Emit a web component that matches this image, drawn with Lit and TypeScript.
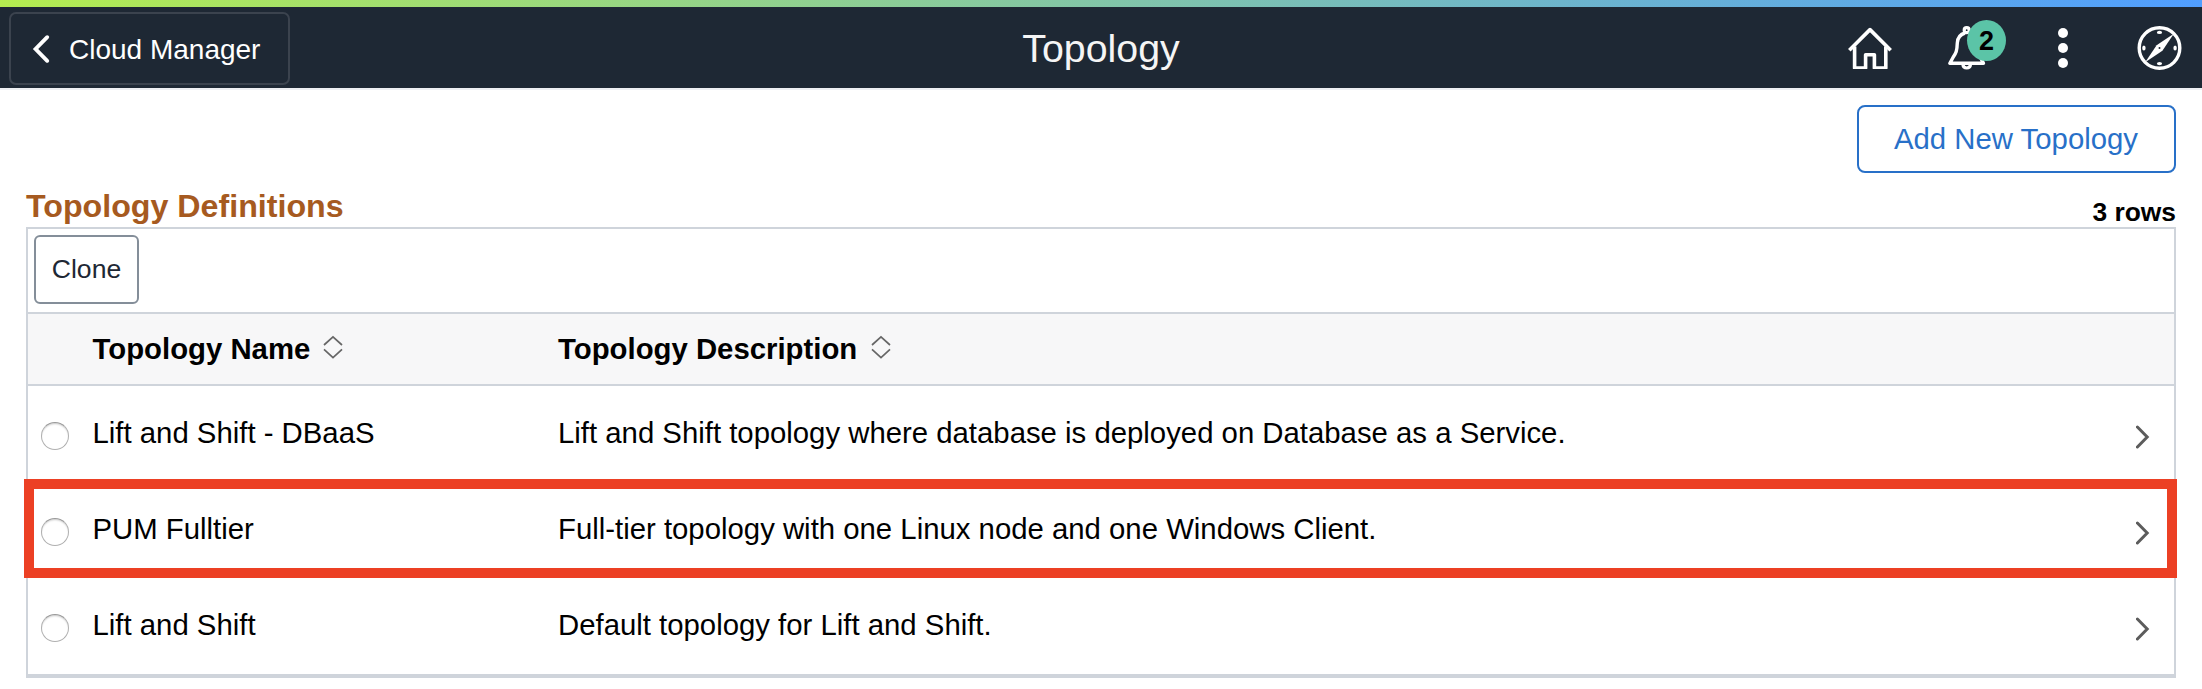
import { LitElement, html, css, svg } from "lit";
import { customElement } from "lit/decorators.js";

interface Topology {
  name: string;
  description: string;
  highlighted?: boolean;
}

const topologies: Topology[] = [
  {
    name: "Lift and Shift - DBaaS",
    description:
      "Lift and Shift topology where database is deployed on Database as a Service.",
  },
  {
    name: "PUM Fulltier",
    description: "Full-tier topology with one Linux node and one Windows Client.",
    highlighted: true,
  },
  { name: "Lift and Shift", description: "Default topology for Lift and Shift." },
];

@customElement("app-header")
class AppHeader extends LitElement {
  static styles = css`
    :host {
      display: block;
    }
    .stripe {
      height: 7px;
      background: linear-gradient(to right, #b4ed50, #509eff);
    }
    .bar {
      box-sizing: border-box;
      height: 83px;
      padding: 5px 20px 0 9px;
      background: #1e2834;
      border-bottom: 2px solid #eef0f3;
      display: grid;
      grid-template-columns: 1fr auto 1fr;
      align-items: start;
      color: #fff;
    }
    .back {
      box-sizing: border-box;
      width: 281px;
      height: 73px;
      border: 2px solid #3b434e;
      border-radius: 7px;
      background: none;
      color: inherit;
      font: inherit;
      font-size: 28px;
      padding: 3px 0 0 21px;
      display: flex;
      align-items: center;
      gap: 19px;
      white-space: nowrap;
    }
    .back svg {
      margin-top: -2px;
    }
    .title {
      margin: 0;
      font-size: 39.3px;
      font-weight: 400;
      line-height: 73px;
      color: #f5f5f5;
      padding-left: 11px;
    }
    .actions {
      justify-self: end;
      display: flex;
      height: 72px;
      align-items: center;
    }
    .home {
      margin-top: -2px;
    }
    .bell {
      position: relative;
      display: flex;
      margin: -2px 72px 0 56px;
    }
    .badge {
      position: absolute;
      left: 19px;
      top: -4px;
      width: 39px;
      height: 41px;
      border-radius: 50%;
      background: #5bc4a7;
      color: #000;
      font-size: 27px;
      font-weight: 700;
      line-height: 43px;
      text-align: center;
    }
    .compass {
      margin-left: 68px;
    }
    svg {
      display: block;
      flex: none;
    }
  `;

  render() {
    return html`
      <div class="stripe"></div>
      <header class="bar">
        <button class="back">
          <svg width="18" height="30" viewBox="0 0 18 30" fill="none" stroke="#fff" stroke-width="3.9" stroke-linecap="round" stroke-linejoin="miter">
            <path d="M15.2 3.2 3.6 15 15.2 26.8" />
          </svg>
          <span>Cloud Manager</span>
        </button>
        <h1 class="title">Topology</h1>
        <nav class="actions">
          <svg class="home" width="44" height="44" viewBox="0 0 44 44" fill="none" stroke="#fff" stroke-width="3.6" stroke-linejoin="round">
            <path d="M1.3 25.2 22 4.6 42.7 25.2" />
            <path d="M6.6 21.5V43H17.6V29.8H26.4V43H37.8V21.5" />
          </svg>
          <div class="bell">
            <svg width="38" height="46" viewBox="0 0 38 46" fill="none" stroke="#fff" stroke-width="3.4" stroke-linejoin="round">
              <circle cx="18.7" cy="6.2" r="2.5" stroke-width="3.2" />
              <path d="M17 9C11.5 10.5 9.6 14.5 9.3 19C9 27 8.2 29 5 33.5L1.9 39.3H35.5L32.4 33.5C29 28 28.4 26 28.1 19C27.8 14.5 25.9 10.5 20.4 9" />
              <path d="M14.8 40C15.3 45.3 22.1 45.3 22.6 40" stroke-width="3.2" />
            </svg>
            <span class="badge">2</span>
          </div>
          <svg width="10" height="42" viewBox="0 0 10 42" fill="#fff">
            ${[6, 21, 36].map((y) => svg`<circle cx="5" cy=${y} r="5" />`)}
          </svg>
          <svg class="compass" width="46" height="46" viewBox="0 0 46 46">
            <circle cx="23.5" cy="23" r="20.3" fill="none" stroke="#fff" stroke-width="3.4" />
            <g fill="#fff">
              <ellipse cx="23.5" cy="7.4" rx="2.6" ry="1.7" />
              <ellipse cx="23.5" cy="38.6" rx="2.6" ry="1.7" />
              <ellipse cx="7.9" cy="23" rx="1.7" ry="2.6" />
              <ellipse cx="39.1" cy="23" rx="1.7" ry="2.6" />
            </g>
            <path d="M37.8 8.8 26.4 25.8 9.2 37.2 20.6 20.2Z" fill="#fff" />
            <circle cx="23.5" cy="23" r="1" fill="#1e2834" />
          </svg>
        </nav>
      </header>
    `;
  }
}

@customElement("topology-grid")
class TopologyGrid extends LitElement {
  static styles = css`
    :host {
      display: block;
      border: 2px solid #cfd4db;
      border-bottom-width: 4px;
    }
    .toolbar {
      box-sizing: border-box;
      height: 85px;
      padding: 6px;
      border-bottom: 2px solid #cfd4db;
    }
    .clone {
      box-sizing: border-box;
      width: 105px;
      height: 69px;
      border: 2px solid #848e99;
      border-radius: 6px;
      background: #fff;
      color: #1e2834;
      font: inherit;
      font-size: 26.6px;
      padding: 0;
      display: block;
    }
    .line {
      box-sizing: border-box;
      display: grid;
      grid-template-columns: 64.5px 465.5px 1fr 48px;
      align-items: center;
      position: relative;
      color: #000;
      white-space: nowrap;
    }
    .head {
      height: 72px;
      background: #f7f7f8;
      border-bottom: 2px solid #cfd4db;
      font-weight: 700;
    }
    .row {
      height: 96px;
      border-bottom: 2px solid #cfd4db;
    }
    .row:last-child {
      border-bottom-color: transparent;
    }
    .sortable {
      display: flex;
      align-items: center;
      gap: 14px;
    }
    .sortable.name {
      gap: 13px;
    }
    .sort {
      margin-top: -4px;
    }
    .radio {
      box-sizing: border-box;
      width: 28px;
      height: 28px;
      margin: 6px 0 0 13px;
      border: 1px solid #b0b0b0;
      border-top-color: #999;
      border-radius: 50%;
      box-shadow: inset 0 2px 2px -1px #c8c8c8;
    }
    .chevron {
      margin: 8px 0 0 10px;
    }
    .marker {
      position: absolute;
      left: -4px;
      right: -3px;
      top: -3px;
      bottom: -2px;
      border: 10px solid #ec4024;
      z-index: 1;
    }
    svg {
      display: block;
    }
  `;

  private heading(label: string, kind: string) {
    return html`
      <div class="sortable ${kind}">
        <span>${label}</span>
        <svg class="sort" width="20" height="24" viewBox="0 0 20 24" fill="none" stroke="#666" stroke-width="1.7">
          <path d="M1 10 10 1.8 19 10M1 14.4 10 22.6 19 14.4" />
        </svg>
      </div>
    `;
  }

  render() {
    return html`
      <div class="toolbar"><button class="clone">Clone</button></div>
      <div class="line head">
        <span></span>
        ${this.heading("Topology Name", "name")}
        ${this.heading("Topology Description", "description")}
      </div>
      <div>
        ${topologies.map(
          (t) => html`
            <div class="line row">
              <span class="radio"></span>
              <span>${t.name}</span>
              <span>${t.description}</span>
              <svg class="chevron" width="14" height="24" viewBox="0 0 14 24" fill="none" stroke="#5c5c5c" stroke-width="3">
                <path d="M1.4 2 11.2 12 1.4 22" stroke-linecap="round" />
              </svg>
              ${t.highlighted ? html`<div class="marker"></div>` : ""}
            </div>
          `
        )}
      </div>
    `;
  }
}

@customElement("app-root")
class AppRoot extends LitElement {
  static styles = css`
    :host {
      display: block;
      height: 689px;
      background: #fff;
      font-family: "Liberation Sans", Arial, sans-serif;
      font-size: 29.33px;
      overflow: hidden;
    }
    .content {
      padding: 15px 26px 0;
    }
    .page-actions {
      display: flex;
      justify-content: flex-end;
    }
    .add {
      box-sizing: border-box;
      width: 319px;
      height: 68px;
      border: 2px solid #2870c8;
      border-radius: 8px;
      background: #fff;
      color: #2870c8;
      font: inherit;
      padding: 0 1px 0 0;
    }
    .caption {
      display: flex;
      justify-content: space-between;
      height: 54px;
      color: #000;
    }
    .heading {
      margin: 0;
      font-size: 32.2px;
      line-height: 66px;
      color: #a65a20;
    }
    .count {
      font-size: 26.4px;
      font-weight: 700;
      line-height: 79px;
    }
  `;

  render() {
    return html`
      <app-header></app-header>
      <main class="content">
        <div class="page-actions">
          <button class="add">Add New Topology</button>
        </div>
        <div class="caption">
          <h2 class="heading">Topology Definitions</h2>
          <span class="count">3 rows</span>
        </div>
        <topology-grid></topology-grid>
      </main>
    `;
  }
}
